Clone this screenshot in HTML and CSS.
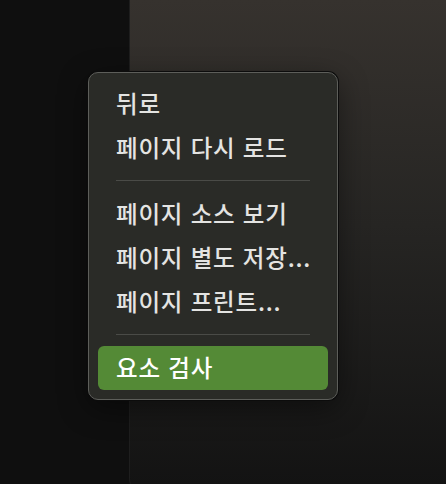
FILE: index.html
```html
<!DOCTYPE html>
<html lang="ko">
<head>
  <meta charset="UTF-8">
  <meta name="viewport" content="width=device-width,initial-scale=1.0">
  <title>Context menu</title>
  <link rel="stylesheet" href="styles.css">
</head>
<body>

  <div class="desktop">
    <div class="sidebar"></div>
    <div class="window"></div>
  </div>

  <div class="context-menu">
    <div class="menu-item">뒤로</div>
    <div class="menu-item">페이지 다시 로드</div>
    <div class="menu-separator"></div>
    <div class="menu-item">페이지 소스 보기</div>
    <div class="menu-item">페이지 별도 저장...</div>
    <div class="menu-item">페이지 프린트...</div>
    <div class="menu-separator"></div>
    <div class="menu-item active">요소 검사</div>
  </div>

</body>
</html>
```

FILE: styles.css
```css
/* Dark desktop with a context menu on top */
body {
  margin: 0;
  padding: 0;
  background: #0f0f0f;
  font-family: "Noto Sans CJK KR", "Noto Sans", sans-serif;
  overflow: hidden;
}
.desktop {
  display: flex;
  height: 484px;
}
.sidebar {
  width: 129px;
  flex-shrink: 0;
  background: #0f0f0f;
}
.window {
  flex: 1;
  height: 500px;
  background: linear-gradient(to bottom, #36322e 0%, #262523 45%, #121212 100%);
  border-left: 1px solid #1e1e1e;
  border-bottom-left-radius: 22px;
}
.context-menu {
  position: absolute;
  left: 88px;
  top: 72px;
  width: 230px;
  padding: 9px;
  background: #2a2b27;
  border: 1px solid #5d5e5a;
  border-radius: 10px;
  box-shadow: 0 0 0 1px #0c0c0c, 0 8px 30px rgba(0, 0, 0, 0.45);
}
.menu-item {
  height: 44px;
  line-height: 42px;
  padding: 0 18px;
  font-size: 23.5px;
  font-weight: 500;
  letter-spacing: 0.8px;
  color: #e4e4e2;
  border-radius: 6px;
  white-space: nowrap;
}
.menu-item.active {
  background: #548a36;
  color: #ffffff;
}
.menu-separator {
  height: 1px;
  margin: 10px 18px 11px;
  background: #4a4b47;
}
```
